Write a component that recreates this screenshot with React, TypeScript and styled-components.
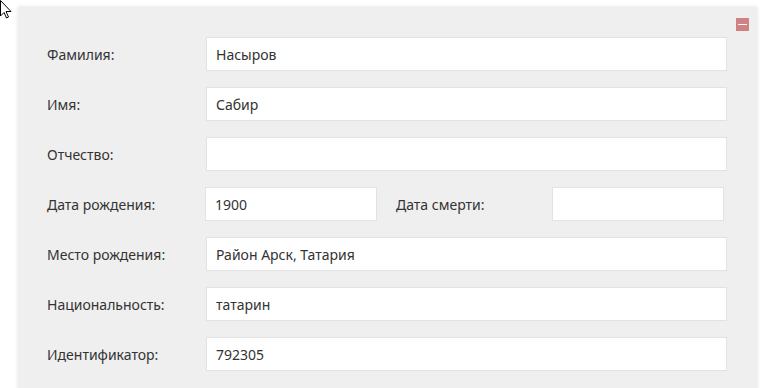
import React from 'react';
import styled, { createGlobalStyle } from 'styled-components';

const GlobalStyle = createGlobalStyle`
    html, body {
        margin: 0;
        padding: 0;
        background: #ffffff;
        height: 100%;
        overflow: hidden;
    }
    body {
        font-family: "Noto Sans", "Open Sans", Arial, sans-serif;
        color: #333333;
    }
`;

type Field = { label: string; value: string };

const fieldsTop: Field[] = [
    { label: 'Фамилия:', value: 'Насыров' },
    { label: 'Имя:', value: 'Сабир' },
    { label: 'Отчество:', value: '' },
];

const fieldsBottom: Field[] = [
    { label: 'Место рождения:', value: 'Район Арск, Татария' },
    { label: 'Национальность:', value: 'татарин' },
    { label: 'Идентификатор:', value: '792305' },
];

export default function App() {
    return (
        <>
            <GlobalStyle />
            <Page>
                <Cursor width="12" height="19" viewBox="0 0 12 19">
                    <path d="M0.5 0.5 L0.5 16 L4 12.5 L6.5 18 L8.5 17 L6 11.5 L11 11.5 Z" fill="#ffffff" stroke="#000000" strokeWidth="1" />
                </Cursor>
                <Panel>
                    <CollapseButton aria-label="свернуть" />
                    <Form>
                        {fieldsTop.map((f) => (
                            <Row key={f.label}>
                                <Label>{f.label}</Label>
                                <Input type="text" defaultValue={f.value} />
                            </Row>
                        ))}
                        <Row>
                            <Label $width={158}>Дата рождения:</Label>
                            <Input type="text" defaultValue="1900" $width={172} />
                            <Label $width={156} $offset={19}>Дата смерти:</Label>
                            <Input type="text" defaultValue="" $width={172} />
                        </Row>
                        {fieldsBottom.map((f) => (
                            <Row key={f.label}>
                                <Label>{f.label}</Label>
                                <Input type="text" defaultValue={f.value} />
                            </Row>
                        ))}
                    </Form>
                </Panel>
            </Page>
        </>
    );
}

const Page = styled.div`
    position: relative;
    width: 762px;
    height: 388px;
    padding: 7px 5px 0 18px;
    box-sizing: border-box;
`;

const Cursor = styled.svg`
    position: absolute;
    left: 0;
    top: 0;
`;

const Panel = styled.div`
    position: relative;
    width: 739px;
    height: 400px;
    background: #efefef;
    box-shadow: 0 0 4px rgba(0, 0, 0, 0.12);
    box-sizing: border-box;
    padding: 30px 30px 0 29px;
`;

const CollapseButton = styled.button`
    position: absolute;
    top: 11px;
    right: 8px;
    width: 13px;
    height: 13px;
    padding: 0;
    border: none;
    background: #d08181;
    cursor: pointer;
    &::after {
        content: '';
        position: absolute;
        left: 2px;
        right: 2px;
        top: 6px;
        height: 1px;
        background: #ffffff;
    }
`;

const Form = styled.div`
    display: flex;
    flex-direction: column;
    gap: 16px;
`;

const Row = styled.div`
    display: flex;
    align-items: center;
    height: 34px;
`;

const Label = styled.label<{ $width?: number; $offset?: number }>`
    flex: 0 0 ${(p) => p.$width ?? 159}px;
    margin-left: ${(p) => p.$offset ?? 0}px;
    font-size: 14px;
    color: #333333;
`;

const Input = styled.input<{ $width?: number }>`
    ${(p) => (p.$width ? `flex: 0 0 ${p.$width}px;` : 'flex: 1;')}
    height: 34px;
    box-sizing: border-box;
    border: 1px solid #e2e2e2;
    background: #ffffff;
    padding: 0 9px;
    font-family: "Noto Sans", "Open Sans", Arial, sans-serif;
    font-size: 14px;
    color: #333333;
    outline: none;
    min-width: 0;
`;
